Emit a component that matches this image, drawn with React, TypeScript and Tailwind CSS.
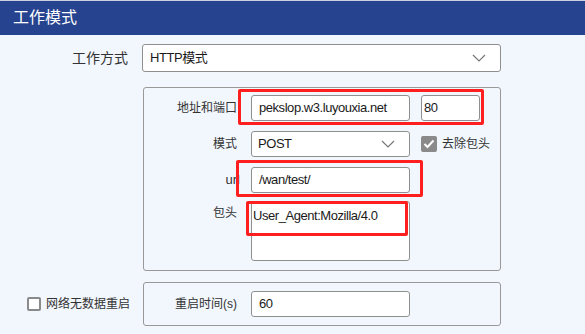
const font = "font-['Liberation_Sans','Noto_Sans_CJK_SC',sans-serif]";

function Chevron() {
    return (
        <svg width="14" height="8" viewBox="0 0 14 8" className="absolute right-[14px] top-1/2 -translate-y-1/2">
            <polyline points="1,1 7,7 13,1" fill="none" stroke="#777" strokeWidth="1.2" />
        </svg>
    );
}

function Field({ value, w, h = 26, chevron = false, cls = "px-[7px]" }: { value: string; w: number; h?: number; chevron?: boolean; cls?: string }) {
    return (
        <div
            className={`relative bg-white border border-[#8f8f8f] rounded-[3px] text-[13px] tracking-[-0.45px] text-[#1a1a1a] flex items-center ${cls}`}
            style={{ width: w, height: h }}
        >
            {value}
            {chevron && <Chevron />}
        </div>
    );
}

function Row({ label, children, cls = "", labelCls = "" }: { label: string; children: React.ReactNode; cls?: string; labelCls?: string }) {
    return (
        <div className={`flex items-center ${cls}`}>
            <div className={`w-[94px] text-right text-[12px] text-[#333] pr-[1px] ${labelCls}`}>{label}</div>
            <div className="ml-[13px] flex items-center">{children}</div>
        </div>
    );
}

export default function App() {
    return (
        <div className={`relative w-[585px] h-[334px] bg-[#f2f6fd] overflow-hidden ${font}`}>
            <div className="h-[35px] bg-[#26438f] border-t border-[#c9d0e2] text-white text-[16px] pl-[13px] flex items-center">
                工作模式
            </div>

            <div className="flex items-center mt-[9px]">
                <div className="w-[128px] text-right text-[14px] text-[#333]">工作方式</div>
                <Field value="HTTP模式" w={359} h={28} chevron cls="ml-[14px] px-[7px]" />
            </div>

            <div className="relative ml-[143px] mt-[15px] w-[358px] h-[184px] border border-[#999] rounded-[3px] pt-[7px]">
                <Row label="地址和端口">
                    <Field value="pekslop.w3.luyouxia.net" w={159} />
                    <Field value="80" w={59} cls="ml-[11px] px-[2px]" />
                </Row>
                <Row label="模式" cls="mt-[10px]">
                    <Field value="POST" w={159} chevron cls="px-[6px]" />
                    <div className="ml-[11px] w-[16px] h-[16px] bg-[#8a8a8a] rounded-[2px] flex items-center justify-center">
                        <svg width="12" height="10" viewBox="0 0 12 10">
                            <polyline points="1.5,5 4.5,8 10.5,1.5" fill="none" stroke="#fff" strokeWidth="2" />
                        </svg>
                    </div>
                    <span className="ml-[5px] text-[12px] text-[#333]">去除包头</span>
                </Row>
                <Row label="url" cls="mt-[10px]" labelCls="translate-x-[3px] text-[13px]">
                    <Field value="/wan/test/" w={159} />
                </Row>
                <div className="flex mt-[8px]">
                    <div className="w-[94px] text-right text-[12px] text-[#333] pr-[1px] pt-[3px]">包头</div>
                    <div className="ml-[13px] w-[159px] h-[60px] bg-white border border-[#8f8f8f] rounded-[3px] text-[13px] tracking-[-0.45px] text-[#1a1a1a] px-[1px] pt-[4px]">
                        User_Agent:Mozilla/4.0
                    </div>
                </div>

                <div className="absolute left-[94px] top-[1px] w-[246px] h-[36px] border-[3px] border-[#ff1f1f] rounded-[2px]" />
                <div className="absolute left-[92px] top-[72px] w-[187px] h-[37px] border-[3px] border-[#ff1f1f] rounded-[2px]" />
                <div className="absolute left-[102px] top-[113px] w-[162px] h-[35px] border-[3px] border-[#ff1f1f] rounded-[2px]" />
            </div>

            <div className="flex items-center mt-[11px]">
                <div className="w-[143px] flex items-center pl-[27px]">
                    <div className="w-[14px] h-[14px] border-2 border-[#8a8a8a] rounded-[2px] bg-white" />
                    <span className="ml-[5px] text-[12px] text-[#333]">网络无数据重启</span>
                </div>
                <div className="w-[358px] h-[44px] border border-[#999] rounded-[3px] flex items-center">
                    <Row label="重启时间(s)">
                        <Field value="60" w={159} />
                    </Row>
                </div>
            </div>
        </div>
    );
}
